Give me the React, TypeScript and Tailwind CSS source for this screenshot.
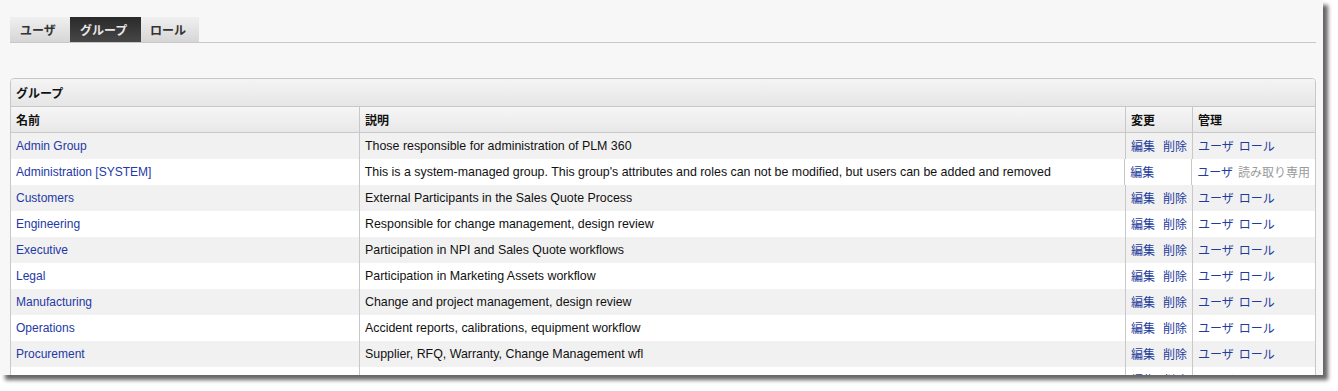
import React from "react";

const rows: { name: string; desc: string; del: boolean; ro?: boolean }[] = [
  { name: "Admin Group", desc: "Those responsible for administration of PLM 360", del: true },
  {
    name: "Administration [SYSTEM]",
    desc: "This is a system-managed group. This group's attributes and roles can not be modified, but users can be added and removed",
    del: false,
    ro: true,
  },
  { name: "Customers", desc: "External Participants in the Sales Quote Process", del: true },
  { name: "Engineering", desc: "Responsible for change management, design review", del: true },
  { name: "Executive", desc: "Participation in NPI and Sales Quote workflows", del: true },
  { name: "Legal", desc: "Participation in Marketing Assets workflow", del: true },
  { name: "Manufacturing", desc: "Change and project management, design review", del: true },
  { name: "Operations", desc: "Accident reports, calibrations, equipment workflow", del: true },
  { name: "Procurement", desc: "Supplier, RFQ, Warranty, Change Management wfl", del: true },
  { name: "Quality", desc: "Quality management and inspection workflows", del: true },
];

const jp = "font-['Noto_Sans_CJK_JP','Liberation_Sans',sans-serif]";
const en = "font-['Liberation_Sans','Noto_Sans_CJK_JP',sans-serif]";

export default function App() {
  return (
    <div className="w-[1338px] h-[391px] bg-white overflow-hidden">
      <div className="w-[1323px] h-[375px] bg-[#f7f7f7] overflow-hidden shadow-[5px_5px_4px_rgba(0,0,0,0.6)]">
        <div className="pl-[10px] pr-[7px] pt-[17px]">
          {/* Tabs */}
          <div className={`flex h-[26px] border-b border-[#c8c8c8] text-[12px] font-bold leading-none ${jp}`}>
            <div className="flex items-center px-[10px] w-[60px] bg-gradient-to-b from-[#f0f0f0] to-[#d6d6d6] text-[#333]">ユーザ</div>
            <div className="flex items-center px-[10px] w-[71px] bg-gradient-to-b from-[#2a2a2a] to-[#474747] text-[#e8e8e8]">グループ</div>
            <div className="flex items-center px-[9px] w-[58px] bg-gradient-to-b from-[#f0f0f0] to-[#d6d6d6] text-[#333]">ロール</div>
          </div>

          {/* Panel */}
          <div className="mt-[35px] w-[1306px] border border-[#c8c8c8] rounded-t-[4px] overflow-hidden">
            <div className={`h-[28px] flex items-center px-[5px] bg-gradient-to-b from-[#f4f4f4] to-[#e6e6e6] border-b border-[#c8c8c8] text-[12px] font-bold text-[#111] ${jp}`}>
              グループ
            </div>
            <div className={`flex h-[26px] bg-gradient-to-b from-[#f6f6f6] to-[#e8e8e8] border-b border-[#c8c8c8] text-[12px] font-bold text-[#111] ${jp}`}>
              <div className="w-[349px] flex items-center px-[5px] border-r border-[#c8c8c8]">名前</div>
              <div className="w-[766px] flex items-center px-[5px] border-r border-[#c8c8c8]">説明</div>
              <div className="w-[67px] flex items-center px-[5px] border-r border-[#c8c8c8]">変更</div>
              <div className="flex-1 flex items-center px-[5px]">管理</div>
            </div>
            {rows.map((r, i) => (
              <div key={r.name} className={`flex h-[26px] text-[12px] ${i % 2 === 0 ? "bg-[#f1f1f1]" : "bg-white"}`}>
                <div className={`w-[349px] flex items-center px-[5px] border-r border-[#c8c8c8] text-[#2438a6] text-[12px] ${en}`}>{r.name}</div>
                <div className={`w-[766px] flex items-center px-[5px] border-r border-[#c8c8c8] text-[#111] text-[12.4px] whitespace-nowrap ${en}`}>{r.desc}</div>
                <div className={`w-[67px] flex items-center px-[5px] border-r border-[#c8c8c8] text-[#1e3c9c] gap-[8px] ${jp}`}>
                  <span>編集</span>
                  {r.del && <span>削除</span>}
                </div>
                <div className={`flex-1 flex items-center px-[5px] gap-[5px] text-[#1e3c9c] whitespace-nowrap ${jp}`}>
                  <span>ユーザ</span>
                  {r.ro ? <span className="text-[#9a9a9a]">読み取り専用</span> : <span>ロール</span>}
                </div>
              </div>
            ))}
          </div>
        </div>
      </div>
    </div>
  );
}
